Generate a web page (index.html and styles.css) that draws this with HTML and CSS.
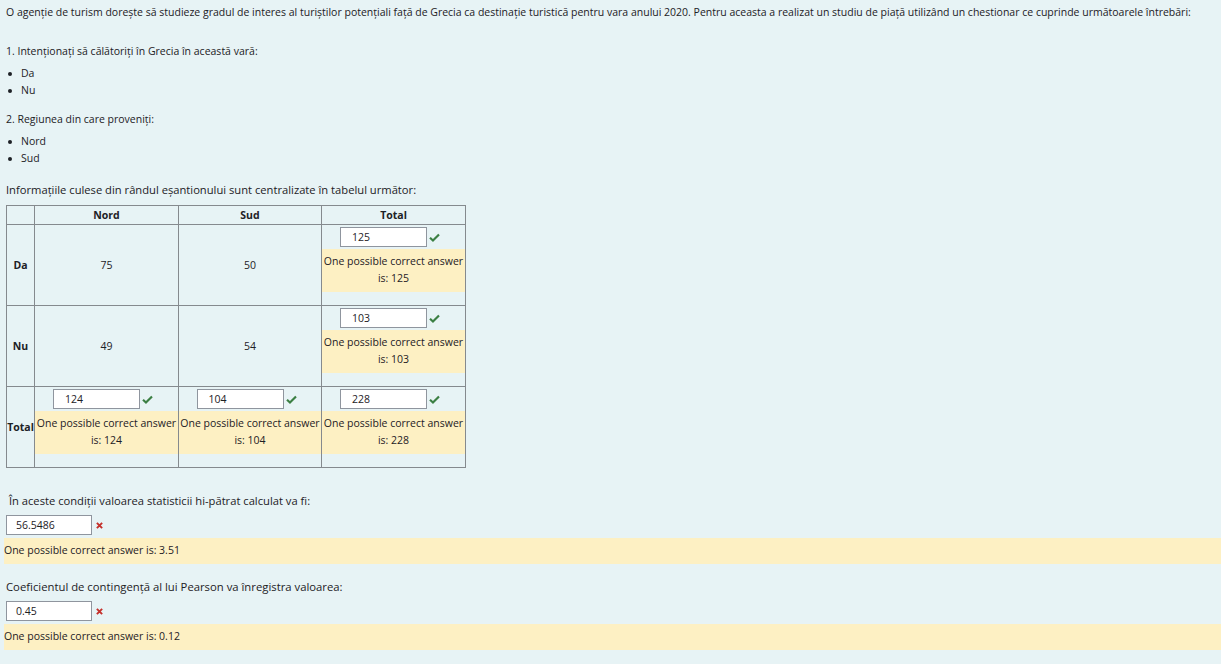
FILE: index.html
```html
<!DOCTYPE html>
<html lang="ro">
<head>
<meta charset="utf-8">
<title>Chestionar</title>
<link rel="stylesheet" href="styles.css">
</head>
<body>
<p class="intro">O agenție de turism dorește să studieze gradul de interes al turiștilor potențiali față de Grecia ca destinație turistică pentru vara anului 2020. Pentru aceasta a realizat un studiu de piață utilizând un chestionar ce cuprinde următoarele întrebări:</p>
<p class="q q1">1. Intenționați să călătoriți în Grecia în această vară:</p>
<ul class="opts">
  <li>Da</li>
  <li>Nu</li>
</ul>
<p class="q q2">2. Regiunea din care proveniți:</p>
<ul class="opts">
  <li>Nord</li>
  <li>Sud</li>
</ul>
<p class="lead">Informațiile culese din rândul eșantionului sunt centralizate în tabelul următor:</p>
<table class="grid">
  <colgroup><col class="c0"><col class="c1"><col class="c2"><col class="c3"></colgroup>
  <thead>
    <tr><th></th><th>Nord</th><th>Sud</th><th>Total</th></tr>
  </thead>
  <tbody>
    <tr>
      <th class="rh">Da</th><td>75</td><td>50</td>
      <td class="ans"><div class="field"><span class="box">125</span><svg class="ok" viewBox="0 0 12 10" width="11" height="9"><path d="M1 5.2 L4.3 8.3 L11 1.6" fill="none" stroke="#3b7f43" stroke-width="2.4"/></svg></div><div class="outcome">One possible correct answer is: 125</div></td>
    </tr>
    <tr>
      <th class="rh">Nu</th><td>49</td><td>54</td>
      <td class="ans"><div class="field"><span class="box">103</span><svg class="ok" viewBox="0 0 12 10" width="11" height="9"><path d="M1 5.2 L4.3 8.3 L11 1.6" fill="none" stroke="#3b7f43" stroke-width="2.4"/></svg></div><div class="outcome">One possible correct answer is: 103</div></td>
    </tr>
    <tr>
      <th class="rh">Total</th>
      <td class="ans"><div class="field"><span class="box">124</span><svg class="ok" viewBox="0 0 12 10" width="11" height="9"><path d="M1 5.2 L4.3 8.3 L11 1.6" fill="none" stroke="#3b7f43" stroke-width="2.4"/></svg></div><div class="outcome">One possible correct answer is: 124</div></td>
      <td class="ans"><div class="field"><span class="box">104</span><svg class="ok" viewBox="0 0 12 10" width="11" height="9"><path d="M1 5.2 L4.3 8.3 L11 1.6" fill="none" stroke="#3b7f43" stroke-width="2.4"/></svg></div><div class="outcome">One possible correct answer is: 104</div></td>
      <td class="ans"><div class="field"><span class="box">228</span><svg class="ok" viewBox="0 0 12 10" width="11" height="9"><path d="M1 5.2 L4.3 8.3 L11 1.6" fill="none" stroke="#3b7f43" stroke-width="2.4"/></svg></div><div class="outcome">One possible correct answer is: 228</div></td>
    </tr>
  </tbody>
</table>
<p class="lead q3">&nbsp;În aceste condiții valoarea statisticii hi-pătrat calculat va fi:</p>
<div class="field left"><span class="box">56.5486</span><svg class="bad" viewBox="0 0 8 8" width="7" height="7"><path d="M1 1 L7 7 M7 1 L1 7" stroke="#c4302b" stroke-width="2.2"/></svg></div>
<div class="outcome wide">One possible correct answer is: 3.51</div>
<p class="lead q4">Coeficientul de contingență al lui Pearson va înregistra valoarea:</p>
<div class="field left"><span class="box">0.45</span><svg class="bad" viewBox="0 0 8 8" width="7" height="7"><path d="M1 1 L7 7 M7 1 L1 7" stroke="#c4302b" stroke-width="2.2"/></svg></div>
<div class="outcome wide">One possible correct answer is: 0.12</div>
</body>
</html>
```
FILE: styles.css
```css
html, body {
  margin: 0;
  padding: 0;
}
body {
  background: #e7f3f5;
  color: #1d2125;
  font-family: "Open Sans", "Noto Sans", "DejaVu Sans", sans-serif;
  font-size: 10.5px;
  line-height: 17px;
  padding: 4px 0 0 6px;
}
p { margin: 0; }
.intro { white-space: nowrap; }
.q1 { margin-top: 22px; }
.q2 { margin-top: 12px; }
.opts {
  list-style: none;
  margin: 5px 0 0;
  padding: 0;
}
.opts li {
  display: flex;
  align-items: center;
  gap: 9px;
}
.opts li::before {
  content: "";
  width: 4px;
  height: 4px;
  border-radius: 50%;
  background: #1d2125;
  margin-left: 2px;
}
.lead {
  font-size: 11.2px;
  line-height: 18px;
}
.opts + .lead { margin-top: 14px; }
.grid {
  margin-top: 6px;
  border-collapse: collapse;
  width: 459px;
  table-layout: fixed;
}
.c0 { width: 28px; }
.c1 { width: 144px; }
.c2 { width: 143px; }
.c3 { width: 144px; }
.grid th, .grid td {
  border: 1px solid #858a8e;
  padding: 0;
  text-align: center;
  vertical-align: middle;
}
.grid thead th {
  font-weight: 700;
  height: 18px;
}
.grid th.rh { font-weight: 700; }
.grid td.ans { padding-top: 2px; }
.field {
  display: flex;
  align-items: center;
  justify-content: center;
  gap: 2px;
  padding-right: 7px;
}
.box {
  display: block;
  box-sizing: border-box;
  width: 87px;
  height: 20px;
  line-height: 18px;
  border: 1px solid #8f959e;
  background: #fff;
  text-align: left;
  padding-left: 11px;
}
.outcome {
  background: #fdf0c3;
  margin: 2px 0 13px;
  padding: 4px 0 5px;
}
.q3 { margin-top: 24px; }
.q4 { margin-top: 14px; font-size: 11.3px; }
.field.left {
  justify-content: flex-start;
  padding-right: 0;
  margin-top: 5px;
  gap: 4px;
}
.field.left .box { width: 86px; padding-left: 9px; }
.outcome.wide {
  margin: 3px 0 0 -2px;
  padding: 4px 0 5px 0;
  text-align: left;
}
```
